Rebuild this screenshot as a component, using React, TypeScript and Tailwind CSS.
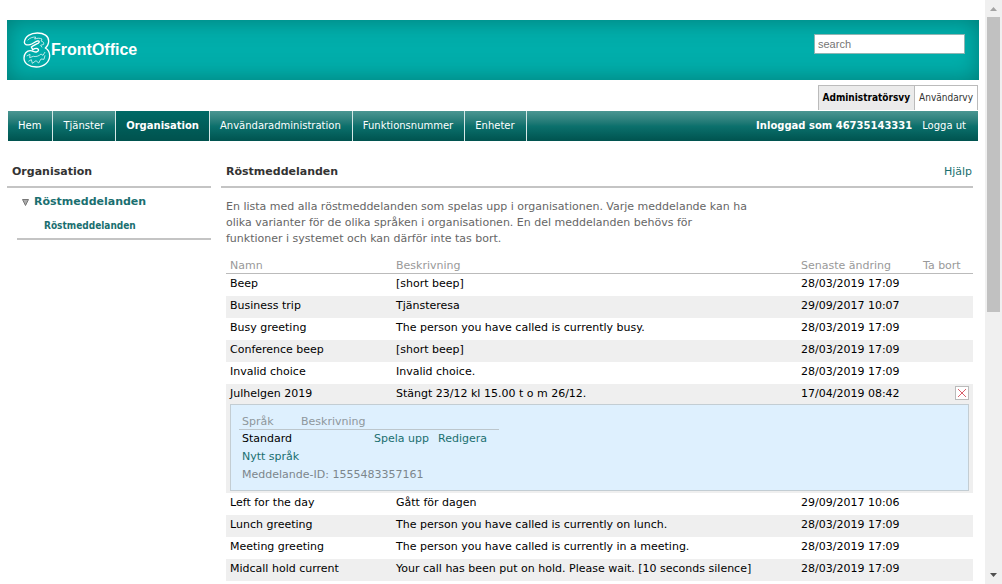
import { Fragment, useState } from "react";

type Message = {
  name: string;
  description: string;
  changed: string;
  id?: string;
};

const navItems = ["Hem", "Tjänster", "Organisation", "Användaradministration", "Funktionsnummer", "Enheter"];

const messages: Message[] = [
  { name: "Beep", description: "[short beep]", changed: "28/03/2019 17:09" },
  { name: "Business trip", description: "Tjänsteresa", changed: "29/09/2017 10:07" },
  { name: "Busy greeting", description: "The person you have called is currently busy.", changed: "28/03/2019 17:09" },
  { name: "Conference beep", description: "[short beep]", changed: "28/03/2019 17:09" },
  { name: "Invalid choice", description: "Invalid choice.", changed: "28/03/2019 17:09" },
  { name: "Julhelgen 2019", description: "Stängt 23/12 kl 15.00 t o m 26/12.", changed: "17/04/2019 08:42", id: "1555483357161" },
  { name: "Left for the day", description: "Gått för dagen", changed: "29/09/2017 10:06" },
  { name: "Lunch greeting", description: "The person you have called is currently on lunch.", changed: "28/03/2019 17:09" },
  { name: "Meeting greeting", description: "The person you have called is currently in a meeting.", changed: "28/03/2019 17:09" },
  {
    name: "Midcall hold current",
    description: "Your call has been put on hold. Please wait. [10 seconds silence]",
    changed: "28/03/2019 17:09"
  }
];

function Logo() {
  return (
    <a href="#" className="flex items-center text-white">
      <svg width="28" height="36" viewBox="0 0 84 108" fill="none" stroke="currentColor" strokeLinejoin="round" aria-hidden="true">
        <path
          strokeWidth="4"
          d="M4 31C6 13 23 3 43 3c20 0 34 9 34 24 0 9-4 16-10 21 9 5 13 13 13 23 0 19-17 34-40 34C18 105 3 94 3 78c0-13 8-22 19-22 8 0 11 5 18 4 5-1 8-5 6-8-3-4-10-3-17 1l-4-8c7-6 14-8 20-11 6-4 4-9-2-7-8 2-13 9-22 11C11 40 4 38 4 31z"
        />
        <path
          strokeWidth="3"
          strokeOpacity="0.7"
          d="M14 25c6-7 14-10 24-10l-3 6c8-3 16-3 22 0l-3 6c6 1 9 5 8 10l-9 3 4 6"
        />
        <path
          strokeWidth="3"
          strokeOpacity="0.7"
          d="M11 72l10-5-1 10 11-4c6 2 17 0 23-7l6 4 6-10M16 88l9-5 3 11 11-8 8 7 7-12 9 1 3-12"
        />
      </svg>
      <span className="font-['Liberation_Sans',Arial,sans-serif] text-base font-bold">FrontOffice</span>
    </a>
  );
}

function DeleteButton({ name }: { name: string }) {
  return (
    <button type="button" aria-label={`Ta bort ${name}`} className="block cursor-pointer border border-[#bbb] bg-white">
      <svg width="12" height="12" viewBox="0 0 12 12" stroke="#d9606c" aria-hidden="true">
        <path d="M2 2l8 8M10 2l-8 8" />
      </svg>
    </button>
  );
}

function MessageDetails({ id }: { id: string }) {
  return (
    <div className="mx-1 mb-0.5 border border-[#c3cdd3] bg-[#def0fe] px-2 pt-2.5 pb-1.5 leading-[18px]">
      <table className="border-collapse text-left">
        <thead>
          <tr className="border-b border-[#bcc6cc] leading-[14px] text-[#8e979c]">
            <th className="w-[59px] px-[3px] font-normal">Språk</th>
            <th className="w-[73px] px-[3px] font-normal">Beskrivning</th>
            <th className="w-16" />
            <th className="w-16" />
          </tr>
        </thead>
        <tbody>
          <tr>
            <td className="px-[3px]">Standard</td>
            <td />
            <td className="px-[3px] whitespace-nowrap">
              <a href="#" className="text-[#1a6f70]">Spela upp</a>
            </td>
            <td className="px-[3px]">
              <a href="#" className="text-[#1a6f70]">Redigera</a>
            </td>
          </tr>
        </tbody>
      </table>
      <div className="px-[3px]">
        <a href="#" className="text-[#1a6f70]">Nytt språk</a>
        <p className="text-[#7c868c]">Meddelande-ID: {id}</p>
      </div>
    </div>
  );
}

function ScrollBar() {
  return (
    <div aria-hidden="true" className="flex w-[17px] shrink-0 flex-col items-center bg-[#f0f0f0]">
      <svg width="17" height="17" viewBox="0 0 17 17" className="shrink-0">
        <path fill="#a3a3a3" d="M5 11l3.500-4 3.500 4z" />
      </svg>
      <div className="h-[295px] w-[13px] bg-[#c1c1c1]" />
      <svg width="17" height="17" viewBox="0 0 17 17" className="mt-auto shrink-0">
        <path fill="#505050" d="M5 6l3.500 4 3.500-4z" />
      </svg>
    </div>
  );
}

export default function App() {
  const [search, setSearch] = useState("");

  return (
    <div className="flex h-screen overflow-hidden bg-white font-['DejaVu_Sans',Verdana,sans-serif] text-[11px] text-black">
      <div className="min-w-0 flex-1 pt-5 pr-1.5 pl-[7px]">
        <header className="flex h-[60px] items-center justify-between bg-[#00aeab] pr-3.5 pl-4 shadow-[inset_0_0_22px_#007c76]">
          <Logo />
          <input
            type="text"
            aria-label="search"
            placeholder="search"
            value={search}
            onChange={(e) => setSearch(e.target.value)}
            className="mb-3 h-5 w-[151px] border border-[#8fb5b3] bg-white px-[3px] font-['Liberation_Sans',Arial,sans-serif] text-[11px] outline-none placeholder:text-[#757575]"
          />
        </header>

        <div className="mt-[5px] mr-px flex justify-end font-['DejaVu_Sans_Condensed',Tahoma,sans-serif] text-[10px] leading-6">
          <a href="#" className="border-t border-l border-[#bbb] bg-[#ebebeb] px-1 font-bold">Administratörsvy</a>
          <a href="#" className="border-x border-t border-[#bbb] px-1 text-[#333]">Användarvy</a>
        </div>

        <nav className="mx-px mt-px flex justify-between bg-linear-to-b from-[#4a9692] via-[#0c716d] to-[#00534f] text-[10px] leading-[30px] text-white">
          <ul className="flex">
            {navItems.map((item) => (
              <li key={item} className="border-r border-[#d5e8e7]">
                <a
                  href="#"
                  className={
                    item === "Organisation"
                      ? "block bg-linear-to-b from-[#006a66] to-[#00524e] px-2.5 font-bold"
                      : "block pr-[11px] pl-2.5"
                  }
                >
                  {item}
                </a>
              </li>
            ))}
          </ul>
          <div className="flex gap-2.5 pr-3">
            <span className="font-bold">Inloggad som 46735143331</span>
            <a href="#">Logga ut</a>
          </div>
        </nav>

        <div className="mt-[15px] flex gap-2.5 pr-1.5">
          <aside className="w-[204px] shrink-0">
            <h2 className="border-b-2 border-[#c4c4c4] px-[5px] pt-1 pb-0.5 leading-6 font-bold text-[#333]">Organisation</h2>
            <ul className="ml-2.5 border-b-2 border-[#c4c4c4] pb-0.5 font-bold text-[#1a6f70]">
              <li>
                <a href="#" className="flex items-center gap-1 pl-1 leading-7">
                  <svg width="9" height="9" viewBox="0 0 9 9" fill="#aaa" stroke="#777" aria-hidden="true">
                    <path d="M1.500 1.500h6l-3 6z" />
                  </svg>
                  Röstmeddelanden
                </a>
                <a
                  href="#"
                  className="block pl-[27px] font-['DejaVu_Sans_Condensed',Tahoma,sans-serif] text-[10px] leading-5"
                >
                  Röstmeddelanden
                </a>
              </li>
            </ul>
          </aside>

          <main className="min-w-0 flex-1">
            <div className="flex justify-between border-b-2 border-[#c4c4c4] px-[5px] pt-1 pb-0.5 leading-6">
              <h1 className="font-bold text-[#333]">Röstmeddelanden</h1>
              <a href="#" className="-mr-1 text-[#1a6f70]">Hjälp</a>
            </div>

            <div className="pl-[5px]">
              <p className="mt-[11px] max-w-[525px] leading-4 text-[#666]">
                En lista med alla röstmeddelanden som spelas upp i organisationen. Varje meddelande kan ha olika
                varianter för de olika språken i organisationen. En del meddelanden behövs för funktioner i systemet
                och kan därför inte tas bort.
              </p>

              <table className="mt-3 w-full table-fixed border-collapse text-left">
                <thead>
                  <tr className="border-b border-[#bbb] leading-[14px] whitespace-nowrap text-[#999]">
                    <th className="w-[166px] px-1 font-normal">Namn</th>
                    <th className="px-1 font-normal">Beskrivning</th>
                    <th className="w-[122px] px-1 font-normal">Senaste ändring</th>
                    <th className="w-[54px] px-1 font-normal">Ta bort</th>
                  </tr>
                </thead>
                <tbody className="align-top">
                  {messages.map((m, i) => (
                    <Fragment key={m.name}>
                      <tr className={clsxRow(i % 2 === 1, Boolean(m.id))}>
                        <td className="px-1">{m.name}</td>
                        <td className="px-1">{m.description}</td>
                        <td className="px-1 whitespace-nowrap">{m.changed}</td>
                        <td className="px-1 pt-0.5">
                          {m.id ? (
                            <div className="flex justify-end">
                              <DeleteButton name={m.name} />
                            </div>
                          ) : null}
                        </td>
                      </tr>
                      {m.id ? (
                        <tr className="bg-[#efefef]">
                          <td colSpan={4}>
                            <MessageDetails id={m.id} />
                          </td>
                        </tr>
                      ) : null}
                    </Fragment>
                  ))}
                </tbody>
              </table>
            </div>
          </main>
        </div>
      </div>
      <ScrollBar />
    </div>
  );
}

// an opened row sits tighter against its details box
function clsxRow(striped: boolean, opened: boolean) {
  const size = opened ? "h-5 leading-5" : "h-[22px] leading-5";
  return striped ? `${size} bg-[#efefef]` : size;
}
